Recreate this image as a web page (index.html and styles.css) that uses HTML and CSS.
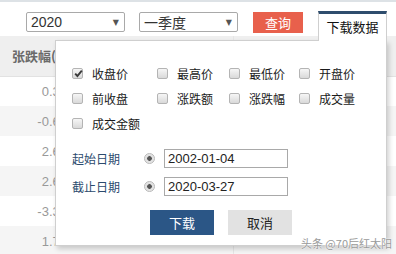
FILE: index.html
```html
<!DOCTYPE html>
<html lang="zh">
<head>
<meta charset="utf-8">
<link rel="stylesheet" href="styles.css">
</head>
<body>
<div class="page">
  <div class="toolbar">
    <div class="select s1"><span class="val num">2020</span><span class="arrow">▼</span></div>
    <div class="select s2"><span class="val">一季度</span><span class="arrow">▼</span></div>
    <div class="btn-query">查询</div>
    <div class="tab">下载数据</div>
  </div>
  <table class="grid">
    <tr class="head"><th class="c1">张跌幅(%)</th><th class="c2">成交量</th><th class="c3">成交金额</th></tr>
    <tr><td class="c1">0.37</td><td class="c2"></td><td class="c3"></td></tr>
    <tr class="alt"><td class="c1">-0.64</td><td class="c2"></td><td class="c3"></td></tr>
    <tr><td class="c1">2.64</td><td class="c2"></td><td class="c3"></td></tr>
    <tr class="alt"><td class="c1">2.61</td><td class="c2"></td><td class="c3"></td></tr>
    <tr><td class="c1">-3.34</td><td class="c2"></td><td class="c3"></td></tr>
    <tr class="alt"><td class="c1">1.72</td><td class="c2"></td><td class="c3"></td></tr>
  </table>
  <div class="panel">
    <div class="checks">
      <label class="chk"><span class="box on"><svg viewBox="0 0 11 11" width="11" height="11"><path d="M2.2 5.6 L4.4 8 L8.8 2.6" fill="none" stroke="#3a3a3a" stroke-width="1.9"/></svg></span>收盘价</label>
      <label class="chk"><span class="box"></span>最高价</label>
      <label class="chk"><span class="box"></span>最低价</label>
      <label class="chk"><span class="box"></span>开盘价</label>
      <label class="chk"><span class="box"></span>前收盘</label>
      <label class="chk"><span class="box"></span>涨跌额</label>
      <label class="chk"><span class="box"></span>涨跌幅</label>
      <label class="chk"><span class="box"></span>成交量</label>
      <label class="chk"><span class="box"></span>成交金额</label>
    </div>
    <div class="dates">
      <div class="drow"><span class="dlabel">起始日期</span><span class="radio"></span><span class="dinput">2002-01-04</span></div>
      <div class="drow"><span class="dlabel">截止日期</span><span class="radio"></span><span class="dinput">2020-03-27</span></div>
    </div>
    <div class="actions">
      <div class="btn-dl">下载</div>
      <div class="btn-cancel">取消</div>
    </div>
  </div>
  <div class="watermark">头条 @70后红太阳</div>
</div>
</body>
</html>
```
FILE: styles.css
```css
* { box-sizing: border-box; }
html, body { margin: 0; padding: 0; background: #fff; }
body { font-family: "Noto Sans CJK SC", "Liberation Sans", sans-serif; width: 396px; height: 254px; overflow: hidden; }
.page { position: relative; width: 396px; height: 254px; border-top: 2px solid #dde2e6; }

.toolbar { display: flex; align-items: flex-start; height: 34px; padding: 10px 0 0 26px; }
.select { width: 99px; height: 20px; border: 1px solid #a9a9a9; border-radius: 2px; display: flex; align-items: center; justify-content: space-between; padding: 0 5px 0 4px; margin-right: 14px; background: #fff; }
.s2 { margin-right: 15px; }
.val { font-size: 14px; color: #333; line-height: 18px; }
.val.num { font-family: "Liberation Sans", sans-serif; font-size: 14px; }
.arrow { font-size: 8px; color: #555; font-family: "DejaVu Sans", sans-serif; }
.btn-query { width: 50px; height: 21px; background: #e8604c; color: #fff; font-size: 13px; display: flex; align-items: center; justify-content: center; margin-right: 15px; }
.tab { position: relative; z-index: 3; width: 69px; height: 30px; margin-top: -1px; background: #fff; border-top: 3px solid #2e4d6d; border-left: 1px solid #cfcfcf; border-right: 1px solid #cfcfcf; font-size: 13px; color: #111; display: flex; align-items: center; justify-content: center; padding-bottom: 2px; }

.grid { width: 396px; border-collapse: collapse; table-layout: fixed; font-family: "Liberation Sans", sans-serif; }
.grid th, .grid td { padding: 0; }
.grid .c1 { width: 74px; }
.grid .c2 { width: 159px; }
.grid .c3 { border-left: 1px solid #e6e6e6; }
.head th { height: 40px; background: #efefef; border-bottom: 1px solid #e2e2e2; font-family: "Noto Sans CJK SC", sans-serif; font-size: 13px; font-weight: bold; color: #6a6a6a; text-align: left; padding-left: 12px; white-space: nowrap; overflow: hidden; }
.grid td { height: 30px; font-size: 13px; color: #999; text-align: right; padding-right: 7px; }
.grid tr.alt td { background: #f5f5f5; }

.panel { position: absolute; z-index: 2; left: 55px; top: 38px; width: 332px; height: 206px; background: #fff; border: 1px solid #cfcfcf; box-shadow: 2px 3px 5px rgba(0,0,0,0.18); padding: 20px 0 0 16px; }
.checks { display: grid; grid-template-columns: 85px 72px 70px auto; grid-auto-rows: 25px; }
.chk { display: flex; align-items: center; gap: 9px; font-size: 12px; color: #1a1a1a; }
.box { width: 11px; height: 11px; border: 1px solid #b4b4b4; border-radius: 2px; background: linear-gradient(#f6f6f6, #d9d9d9); display: flex; align-items: center; justify-content: center; position: relative; }
.box svg { position: absolute; left: 0; top: -1px; }

.dates { margin-top: 8px; }
.drow { display: flex; align-items: center; height: 28px; }
.dlabel { width: 72px; font-size: 12px; color: #2b4a6d; }
.radio { width: 11px; height: 11px; border-radius: 50%; border: 1px solid #b8b8b8; background: radial-gradient(circle, #555 0 2px, #dcdcdc 2.6px, #f4f4f4 100%); margin-right: 9px; }
.dinput { width: 124px; height: 19px; border: 1px solid #a9a9a9; font-family: "Liberation Sans", sans-serif; font-size: 13px; color: #222; padding-left: 3px; line-height: 17px; }

.actions { display: flex; gap: 14px; margin-top: 10px; padding-left: 78px; }
.btn-dl, .btn-cancel { width: 64px; height: 25px; font-size: 13px; display: flex; align-items: center; justify-content: center; }
.btn-dl { background: #2b5686; color: #fff; }
.btn-cancel { background: #e2e2e2; color: #222; }

.watermark { position: absolute; z-index: 4; right: 4px; bottom: 3px; font-size: 11px; color: #9a9a9a; text-shadow: 0 0 2px #fff, 0 0 1px #fff; white-space: nowrap; }
```
